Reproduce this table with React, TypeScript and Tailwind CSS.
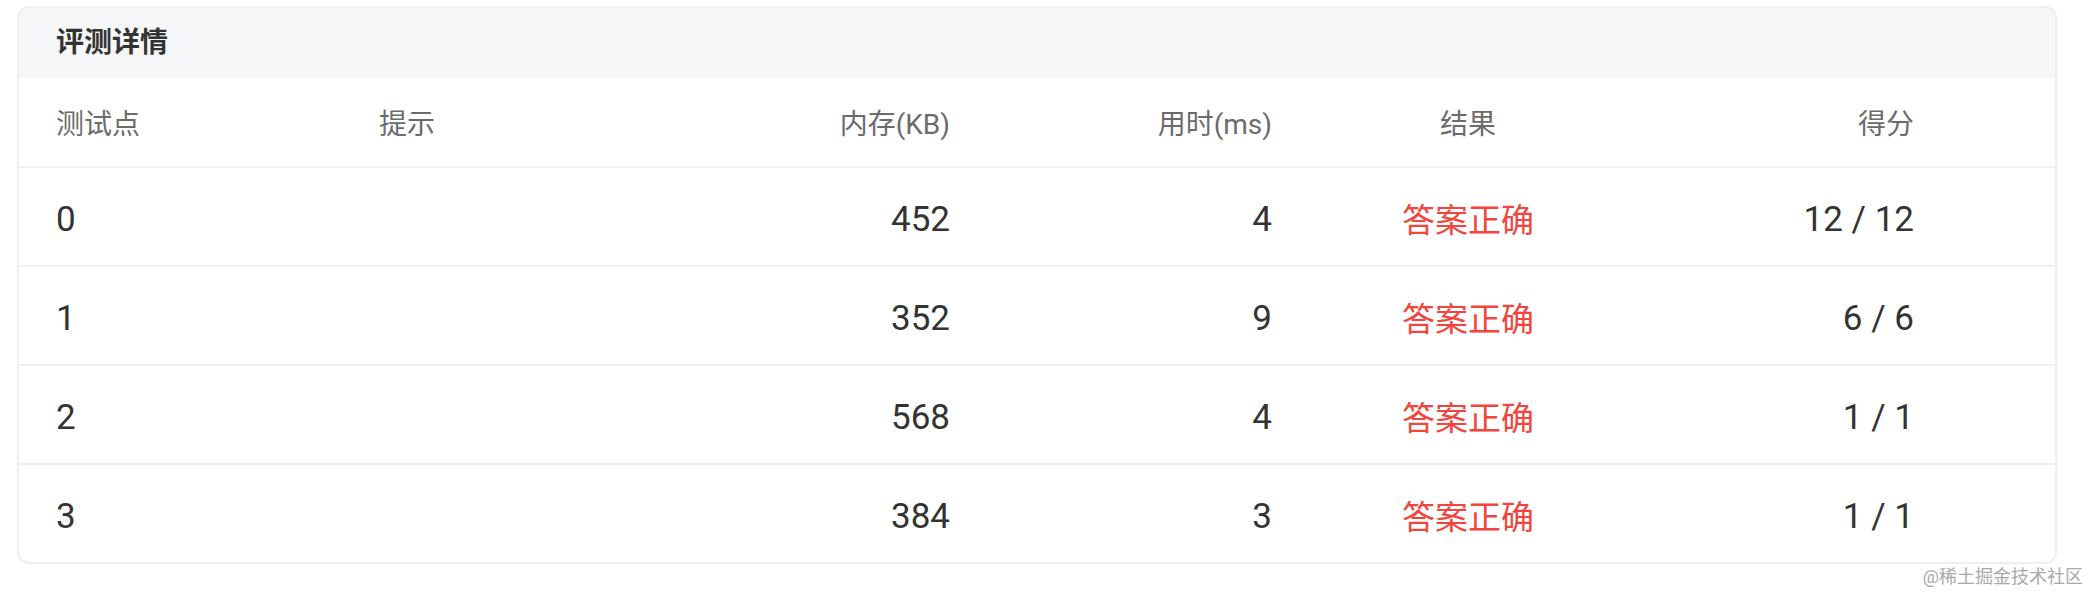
import React from 'react';

interface CaseRow {
  id: number;
  hint: string;
  memory: number;
  time: number;
  result: string;
  score: string;
}

const rows: CaseRow[] = [
  { id: 0, hint: '', memory: 452, time: 4, result: '答案正确', score: '12 / 12' },
  { id: 1, hint: '', memory: 352, time: 9, result: '答案正确', score: '6 / 6' },
  { id: 2, hint: '', memory: 568, time: 4, result: '答案正确', score: '1 / 1' },
  { id: 3, hint: '', memory: 384, time: 3, result: '答案正确', score: '1 / 1' },
];

const grid = 'grid grid-cols-[322px_300px_347px_322px_316px_326px_1fr] items-center';
const font = { fontFamily: 'Roboto, "Noto Sans CJK SC", sans-serif' };

export default function App() {
  return (
    <div className="min-h-screen bg-white pt-[6px] pl-[17px]" style={font}>
      <div className="w-[2040px] rounded-xl border-2 border-[#eeeff1] overflow-hidden">
        <div className="h-[70px] flex items-center px-[37px] bg-[#f5f6f7]">
          <h2 className="text-[28px] font-bold text-[#333]">评测详情</h2>
        </div>

        <div className={`${grid} h-[90px] border-b-2 border-[#eeeff1] text-[28px] text-[#6b6b6b]`}>
          <div className="px-[37px] pt-[6px]">测试点</div>
          <div className="px-[38px] pt-[6px]">提示</div>
          <div className="px-[38px] pt-[6px] text-right">内存(KB)</div>
          <div className="px-[38px] pt-[6px] text-right">用时(ms)</div>
          <div className="px-[38px] pt-[6px] text-center">结果</div>
          <div className="px-[38px] pt-[6px] text-right">得分</div>
          <div />
        </div>

        {rows.map((row, i) => (
          <div
            key={row.id}
            className={`${grid} text-[35px] text-[#333] ${
              i === rows.length - 1 ? 'h-[97px]' : 'h-[99px] border-b-2 border-[#eeeff1]'
            }`}
          >
            <div className="px-[37px] pt-[8px]">{row.id}</div>
            <div className="px-[38px] pt-[8px]">{row.hint}</div>
            <div className="px-[38px] pt-[8px] text-right">{row.memory}</div>
            <div className="px-[38px] pt-[8px] text-right">{row.time}</div>
            <div className="px-[38px] pt-[8px] text-center text-[33px] text-[#f2453d]">{row.result}</div>
            <div className="px-[38px] pt-[8px] text-right">{row.score}</div>
            <div />
          </div>
        ))}
      </div>

      <div className="flex justify-end pr-[8px] mt-[4px]">
        <span className="text-[18px] leading-none text-[#a9a9a9]">@稀土掘金技术社区</span>
      </div>
    </div>
  );
}
